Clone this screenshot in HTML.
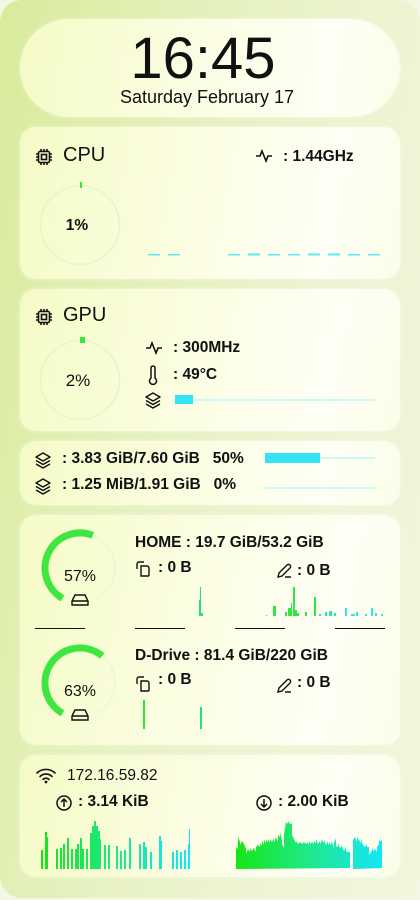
<!DOCTYPE html>
<html><head><meta charset="utf-8"><style>
*{margin:0;padding:0;box-sizing:border-box}
body{width:420px;height:900px;background:#f3f7e4;font-family:"Liberation Sans","DejaVu Sans",sans-serif;color:#111;position:relative;overflow:hidden}
.outer{position:absolute;left:0;top:0;width:420px;height:898px;border-radius:22px;background:linear-gradient(100deg,#d9eb9c 0%,#e6f1c0 40%,#eef5d6 75%,#f1f6dc 100%)}
.p{position:absolute;left:20px;width:380px;border-radius:16px;background:linear-gradient(100deg,#f5fbc6 0%,#fbfde2 45%,#fefff5 80%,#fbfde9 100%);box-shadow:0 0 4px rgba(255,255,255,.5)}
.t{position:absolute;white-space:nowrap}
.b{font-weight:bold;font-size:15.5px}
svg{position:absolute;overflow:visible}
</style></head><body>
<div class="outer"></div>
<div class="p" style="top:19px;height:98px;border-radius:50px"></div>
<div class="t" style="left:0;width:406px;text-align:center;top:25px;font-size:58px;letter-spacing:0px">16:45</div>
<div class="t" style="left:0;width:420px;text-align:center;top:87px;font-size:18px;padding-right:6px">Saturday February 17</div>

<!-- CPU -->
<div class="p" style="top:127px;height:152px"></div>
<svg style="left:35px;top:148px" width="18" height="18" viewBox="0 0 18 18" fill="none" stroke="#111" stroke-width="1.6"><rect x="3.5" y="3.5" width="11" height="11" rx="1.5"/><rect x="6.5" y="6.5" width="5" height="5"/><path d="M6 1v2.5M9 1v2.5M12 1v2.5M6 14.5V17M9 14.5V17M12 14.5V17M1 6h2.5M1 9h2.5M1 12h2.5M14.5 6H17M14.5 9H17M14.5 12H17"/></svg>
<div class="t" style="left:63px;top:144px;font-size:20px">CPU</div>
<svg style="left:256px;top:149px" width="17" height="14" viewBox="0 0 17 14" fill="none" stroke="#111" stroke-width="1.6"><path d="M0 7h4l2-5 4 10 2-5h4"/></svg>
<div class="t b" style="left:283px;top:148px">: 1.44GHz</div>
<svg style="left:40px;top:185px" width="80" height="80"><circle cx="40" cy="40" r="39.5" fill="none" stroke="#e2f7cc" stroke-width="1.5"/></svg>
<div style="position:absolute;left:80px;top:182px;width:2px;height:6px;background:#3be63b"></div>
<div class="t b" style="left:0;width:154px;text-align:center;top:217px;font-size:15.5px">1%</div>
<svg style="left:148px;top:253px" width="235" height="3"><g fill="#5ee8f4"><rect x="0" y="1" width="12" height="1.5"/><rect x="20" y="1" width="12" height="1.5"/><rect x="80" y="1" width="12" height="1.5"/><rect x="100" y="0.5" width="12" height="2"/><rect x="120" y="1" width="12" height="1.5"/><rect x="140" y="1" width="12" height="1.5"/><rect x="160" y="0.5" width="12" height="2"/><rect x="180" y="0.5" width="12" height="2"/><rect x="200" y="1" width="12" height="1.5"/><rect x="220" y="1" width="12" height="1.5"/></g></svg>

<!-- GPU -->
<div class="p" style="top:289px;height:142px"></div>
<svg style="left:35px;top:308px" width="18" height="18" viewBox="0 0 18 18" fill="none" stroke="#111" stroke-width="1.6"><rect x="3.5" y="3.5" width="11" height="11" rx="1.5"/><rect x="6.5" y="6.5" width="5" height="5"/><path d="M6 1v2.5M9 1v2.5M12 1v2.5M6 14.5V17M9 14.5V17M12 14.5V17M1 6h2.5M1 9h2.5M1 12h2.5M14.5 6H17M14.5 9H17M14.5 12H17"/></svg>
<div class="t" style="left:63px;top:304px;font-size:20px">GPU</div>
<svg style="left:40px;top:340px" width="80" height="80"><circle cx="40" cy="40" r="39.5" fill="none" stroke="#e2f7cc" stroke-width="1.5"/></svg>
<div style="position:absolute;left:80px;top:337px;width:5px;height:6px;background:#3be63b"></div>
<div class="t" style="left:0;width:156px;text-align:center;top:371px;font-size:17px">2%</div>
<svg style="left:146px;top:341px" width="17" height="14" viewBox="0 0 17 14" fill="none" stroke="#111" stroke-width="1.6"><path d="M0 7h4l2-5 4 10 2-5h4"/></svg>
<div class="t b" style="left:173px;top:339px">: 300MHz</div>
<svg style="left:148px;top:365px" width="10" height="20" viewBox="0 0 10 20" fill="none" stroke="#111" stroke-width="1.5"><path d="M3 13V3a2 2 0 0 1 4 0v10a3.5 3.5 0 1 1-4 0z"/></svg>
<div class="t b" style="left:173px;top:366px">: 49°C</div>
<svg style="left:144px;top:392px" width="18" height="17" viewBox="0 0 18 17" fill="none" stroke="#111" stroke-width="1.5" stroke-linejoin="round"><path d="M9 1l7 4-7 4-7-4z"/><path d="M2 8.5l7 4 7-4"/><path d="M2 12l7 4 7-4"/></svg>
<div style="position:absolute;left:175px;top:399px;width:200px;height:1.5px;background:#cff8f8"></div>
<div style="position:absolute;left:175px;top:395px;width:18px;height:9px;background:#34e3f5"></div>

<!-- RAM -->
<div class="p" style="top:441px;height:64px"></div>
<svg style="left:34px;top:452px" width="18" height="17" viewBox="0 0 18 17" fill="none" stroke="#111" stroke-width="1.5" stroke-linejoin="round"><path d="M9 1l7 4-7 4-7-4z"/><path d="M2 8.5l7 4 7-4"/><path d="M2 12l7 4 7-4"/></svg>
<div class="t b" style="left:62px;top:450px;font-size:15.5px">: 3.83 GiB/7.60 GiB&nbsp;&nbsp;&nbsp;50%</div>
<div style="position:absolute;left:265px;top:457px;width:110px;height:1.5px;background:#cff8f8"></div>
<div style="position:absolute;left:265px;top:453px;width:55px;height:10px;background:#34e3f5"></div>
<svg style="left:34px;top:478px" width="18" height="17" viewBox="0 0 18 17" fill="none" stroke="#111" stroke-width="1.5" stroke-linejoin="round"><path d="M9 1l7 4-7 4-7-4z"/><path d="M2 8.5l7 4 7-4"/><path d="M2 12l7 4 7-4"/></svg>
<div class="t b" style="left:62px;top:476px;font-size:15.5px">: 1.25 MiB/1.91 GiB&nbsp;&nbsp;&nbsp;0%</div>
<div style="position:absolute;left:265px;top:487px;width:110px;height:1.5px;background:#cff8f8"></div>

<!-- Disk -->
<div class="p" style="top:515px;height:230px"></div>
<svg style="left:0;top:0" width="420" height="900">
<g fill="none" stroke-width="7">
<circle cx="80" cy="568" r="35" stroke="#e6f9d4" stroke-width="1.5" stroke-dasharray="183.3 1000" transform="rotate(120 80 568)"/>
<circle cx="80" cy="568" r="35" stroke="#3fe63f" stroke-dasharray="104.5 1000" transform="rotate(120 80 568)"/>
<circle cx="80" cy="683" r="35" stroke="#e6f9d4" stroke-width="1.5" stroke-dasharray="183.3 1000" transform="rotate(120 80 683)"/>
<circle cx="80" cy="683" r="35" stroke="#3fe63f" stroke-dasharray="115.5 1000" transform="rotate(120 80 683)"/>
</g>
<g fill="none" stroke="#111" stroke-width="1.4">
<path d="M72 601l3-6h10l3 6v4h-16z M72 601h16"/>
<path d="M72 716l3-6h10l3 6v4h-16z M72 716h16"/>
<path d="M137 569v-5a2 2 0 0 1 2-2h5 M141 566h6a2 2 0 0 1 2 2v7a1 1 0 0 1-1 1h-7z"/>
<path d="M137 684v-5a2 2 0 0 1 2-2h5 M141 681h6a2 2 0 0 1 2 2v7a1 1 0 0 1-1 1h-7z"/>
<path d="M278 577l1-4 8-8a1.5 1.5 0 0 1 3 3l-8 8z M285 577h6"/>
<path d="M278 692l1-4 8-8a1.5 1.5 0 0 1 3 3l-8 8z M285 692h6"/>
</g>
<g fill="#111"><rect x="35" y="628" width="50" height="1"/><rect x="135" y="628" width="50" height="1"/><rect x="235" y="628" width="50" height="1"/><rect x="335" y="628" width="50" height="1"/></g>
<g fill="#22e07a"><rect x="199" y="600" width="2" height="16"/><rect x="200" y="587" width="1" height="29"/><rect x="201" y="613" width="2" height="3"/></g>
<g fill="#2de840"><rect x="266" y="615" width="1" height="1"/><rect x="273" y="606" width="3" height="10"/><rect x="285" y="612" width="2" height="4"/><rect x="288" y="608" width="3" height="8"/><rect x="291" y="603" width="1" height="13"/><rect x="293" y="587" width="2" height="29"/><rect x="295" y="610" width="2" height="6"/><rect x="297" y="613" width="2" height="3"/><rect x="305" y="612" width="2" height="4"/><rect x="314" y="597" width="2" height="19"/></g>
<g fill="#2fe8a8"><rect x="319" y="614" width="2" height="2"/><rect x="325" y="612" width="2" height="4"/><rect x="329" y="611" width="3" height="5"/><rect x="334" y="613" width="2" height="3"/></g>
<g fill="#30e8e0"><rect x="345" y="608" width="2" height="8"/><rect x="351" y="614" width="4" height="2"/><rect x="356" y="612" width="2" height="4"/><rect x="365" y="614" width="2" height="2"/><rect x="371" y="608" width="2" height="8"/><rect x="375" y="613" width="2" height="3"/><rect x="381" y="614" width="2" height="2"/></g>
<rect x="143" y="700" width="2" height="29" fill="#2ae838"/><rect x="200" y="707" width="2" height="22" fill="#22e07a"/>
</svg>
<div class="t" style="left:0;width:160px;text-align:center;top:568px;font-size:16px">57%</div>
<div class="t" style="left:0;width:160px;text-align:center;top:683px;font-size:16px">63%</div>
<div class="t" style="left:135px;top:534px;font-size:15.5px;font-weight:bold">HOME : 19.7 GiB/53.2 GiB</div>
<div class="t b" style="left:158px;top:559px">: 0 B</div>
<div class="t b" style="left:297px;top:562px">: 0 B</div>
<div class="t" style="left:135px;top:647px;font-size:15.5px;font-weight:bold">D-Drive : 81.4 GiB/220 GiB</div>
<div class="t b" style="left:158px;top:671px">: 0 B</div>
<div class="t b" style="left:297px;top:674px">: 0 B</div>

<!-- Net -->
<div class="p" style="top:755px;height:122px"></div>
<svg style="left:36px;top:768px" width="20" height="15" viewBox="0 0 20 15" fill="none" stroke="#111" stroke-width="1.6" stroke-linecap="round"><path d="M1 5a13 13 0 0 1 18 0M4 8.5a8.5 8.5 0 0 1 12 0M7 11.5a4 4 0 0 1 6 0"/><circle cx="10" cy="14" r="0.6" fill="#111"/></svg>
<div class="t" style="left:67px;top:767px;font-size:15.5px">172.16.59.82</div>
<svg style="left:56px;top:795px" width="16" height="16" viewBox="0 0 16 16" fill="none" stroke="#111" stroke-width="1.5"><circle cx="8" cy="8" r="7"/><path d="M8 12V4M5 7l3-3 3 3"/></svg>
<div class="t b" style="left:78px;top:793px;font-size:15.5px">: 3.14 KiB</div>
<svg style="left:256px;top:795px" width="16" height="16" viewBox="0 0 16 16" fill="none" stroke="#111" stroke-width="1.5"><circle cx="8" cy="8" r="7"/><path d="M8 4v8M5 9l3 3 3-3"/></svg>
<div class="t b" style="left:278px;top:793px;font-size:15.5px">: 2.00 KiB</div>
<svg style="left:0;top:0" width="420" height="900">
<defs><linearGradient id="g" x1="0" x2="1"><stop offset="0" stop-color="#16e616"/><stop offset=".5" stop-color="#1fe88c"/><stop offset="1" stop-color="#14e6f6"/></linearGradient></defs>
<g fill="url(#g)">
<path d="M41 869v-19h2v19zM45 869v-37h2v37zM47 869v-32h1v32zM56 869v-20h2v20zM60 869v-21h2v21zM63 869v-25h2v25zM67 869v-31h2v31zM71 869v-20h2v20zM75 869v-20h2v20zM77 869v-25h2v25zM80 869v-31h2v31zM82 869v-20h2v20zM86 869v-20h2v20zM90 869v-36h2v-7h2v-5h2v5h2v5h2v8h1v30zM104 869v-24h2v24zM108 869v-24h2v24zM116 869v-23h2v23zM120 869v-18h2v18zM124 869v-19h2v19zM129 869v-31h2v31zM139 869v-25h2v25zM143 869v-27h2v5h2v22zM150 869v-17h2v17zM159 869v-33h2v5h1v28zM172 869v-17h2v17zM176 869v-19h2v19zM180 869v-17h2v17zM184 869v-19h2v19zM189 869v-40h1v40zM188 869v-25h2v25z"/>
<path d="M236 869V847l2 2v-12l2 5v3l2-4 2 3 2 5v5l2-5 2 3v-4l2 3 2-3 2 4v-5l2-2 2 2v-4l2 3v-6l2 5v-5l2 3v-3l2 2v-3l2 4v-4l2 3 2-4v5l2-6 2 5v-7l2 2v-5l2 8v4l2 4v-14l2-12 2 2v-3l2 3 2-1v12l2 4 2 4v-2l2 3 2-2 2 2 2-2 2 2 2-2v3l2-4v3l2-2 2 2v-3l2 2v-4l2 5 2-3v3l2-4 2 3v-3l2 5 2-4v4l2-3v3l2-3 2 6v-5l2-5v8l2 1v-4l2 5 2-2 2 5 2-5v5l2 1 2 0v16zM353 869v-29l2-3 2 5v-5l2 3 2 3v-4l2 6 2 2 2-3v3h2v8l2-3 2-4v3l2-2 2 3v-5l2-3v-4l2 2v-3l1 2v27z"/>
</g>
</svg>
</body></html>
